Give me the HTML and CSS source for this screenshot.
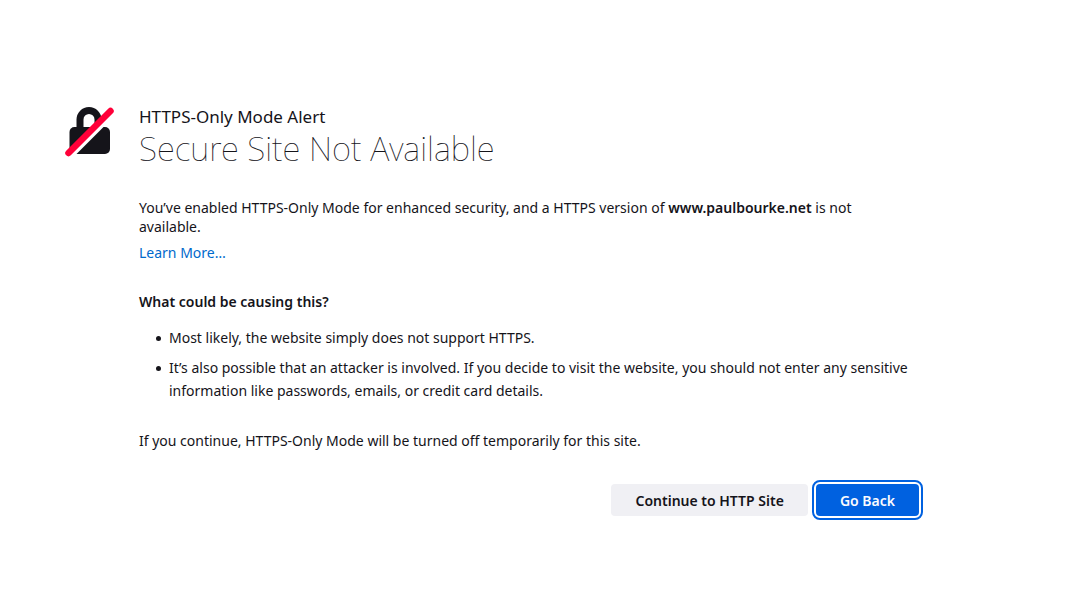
FILE: index.html
```html
<!DOCTYPE html>
<html lang="en">
<head>
    <meta charset="UTF-8">
    <meta name="viewport" content="width=device-width, initial-scale=1.0">
    <title>HTTPS-Only Mode Alert</title>
    <link rel="stylesheet" href="styles.css">
</head>
<body>

    <main class="container">
        <!-- Crossed-out padlock -->
        <svg class="lock-icon" viewBox="0 0 52 52" aria-hidden="true">
            <path class="shackle" d="M16 23V13.500a9 9 0 0 1 18 0V23"/>
            <rect class="lock-body" x="5.500" y="21" width="40.500" height="27" rx="5"/>
            <path class="slash-gap" d="M4 53L53 4"/>
            <path class="slash" d="M4.500 47L46.500 5"/>
        </svg>

        <div class="content">
            <!-- Title section -->
            <header class="title">
                <p class="subtitle">HTTPS-Only Mode Alert</p>
                <h1>Secure Site Not Available</h1>
            </header>

            <p class="intro">You’ve enabled HTTPS-Only Mode for enhanced security, and a HTTPS version of <strong>www.paulbourke.net</strong> is not available.</p>
            <a class="learn-more" href="#">Learn More…</a>

            <!-- Possible reasons -->
            <h2>What could be causing this?</h2>
            <ul class="reasons">
                <li>Most likely, the website simply does not support HTTPS.</li>
                <li>It’s also possible that an attacker is involved. If you decide to visit the website, you should not enter any sensitive information like passwords, emails, or credit card details.</li>
            </ul>
            <p class="note">If you continue, HTTPS-Only Mode will be turned off temporarily for this site.</p>

            <div class="buttons">
                <button type="button">Continue to HTTP Site</button>
                <button type="button" class="primary">Go Back</button>
            </div>
        </div>
    </main>

</body>
</html>
```

FILE: styles.css
```css
* {
    box-sizing: border-box;
}
body {
    margin: 0;
    min-height: 100vh;
    padding: 20px 64px 0;
    display: flex;
    flex-direction: column;
    justify-content: center;
    background-color: #fff;
    color: #15141a;
    font-family: "Noto Sans", sans-serif;
    font-size: 14px;
    line-height: 19px;
}
.container {
    display: flex;
    gap: 23px;
    width: 100%;
    max-width: 855px;
}
.lock-icon {
    flex: none;
    width: 52px;
    height: 52px;
}
.shackle {
    fill: none;
    stroke: #15141a;
    stroke-width: 7;
}
.lock-body {
    fill: #15141a;
}
.slash-gap {
    stroke: #fff;
    stroke-width: 5;
}
.slash {
    stroke: #ff0039;
    stroke-width: 6.5;
    stroke-linecap: round;
}
.content {
    flex: 1;
}
p, h1, h2 {
    margin: 0;
}
strong, h2, button {
    font-weight: 600;
}
.subtitle {
    font-size: 17px;
    line-height: 22px;
}
h1 {
    font-size: 33px;
    font-weight: 100;
    line-height: 42px;
}
.intro {
    margin-top: 28px;
    padding-right: 16px;
}
.learn-more {
    display: inline-block;
    margin-top: 7px;
    color: #0069cc;
    text-decoration: none;
}
h2 {
    margin-top: 30px;
    font-size: 14px;
    line-height: 19px;
}
.reasons {
    margin: 15px 0 0;
    padding-left: 17px;
    line-height: 23px;
    list-style: none;
}
.reasons li {
    display: flex;
    gap: 8px;
    margin-bottom: 7px;
}
/* Bullet */
.reasons li::before {
    content: "";
    flex: none;
    width: 5px;
    height: 5px;
    margin-top: 10px;
    border-radius: 50%;
    background-color: #15141a;
}
.note {
    margin-top: 29px;
}
.buttons {
    display: flex;
    justify-content: flex-end;
    gap: 8px;
    margin-top: 34px;
}
button {
    min-height: 32px;
    padding: 0 24px;
    border: none;
    border-radius: 4px;
    background-color: #f0f0f4;
    color: #15141a;
    font-family: inherit;
    font-size: 14px;
    cursor: pointer;
}
.primary {
    background-color: #0061e0;
    color: #fbfbfe;
    outline: 2px solid #0061e0;
    outline-offset: 2px;
}
```
